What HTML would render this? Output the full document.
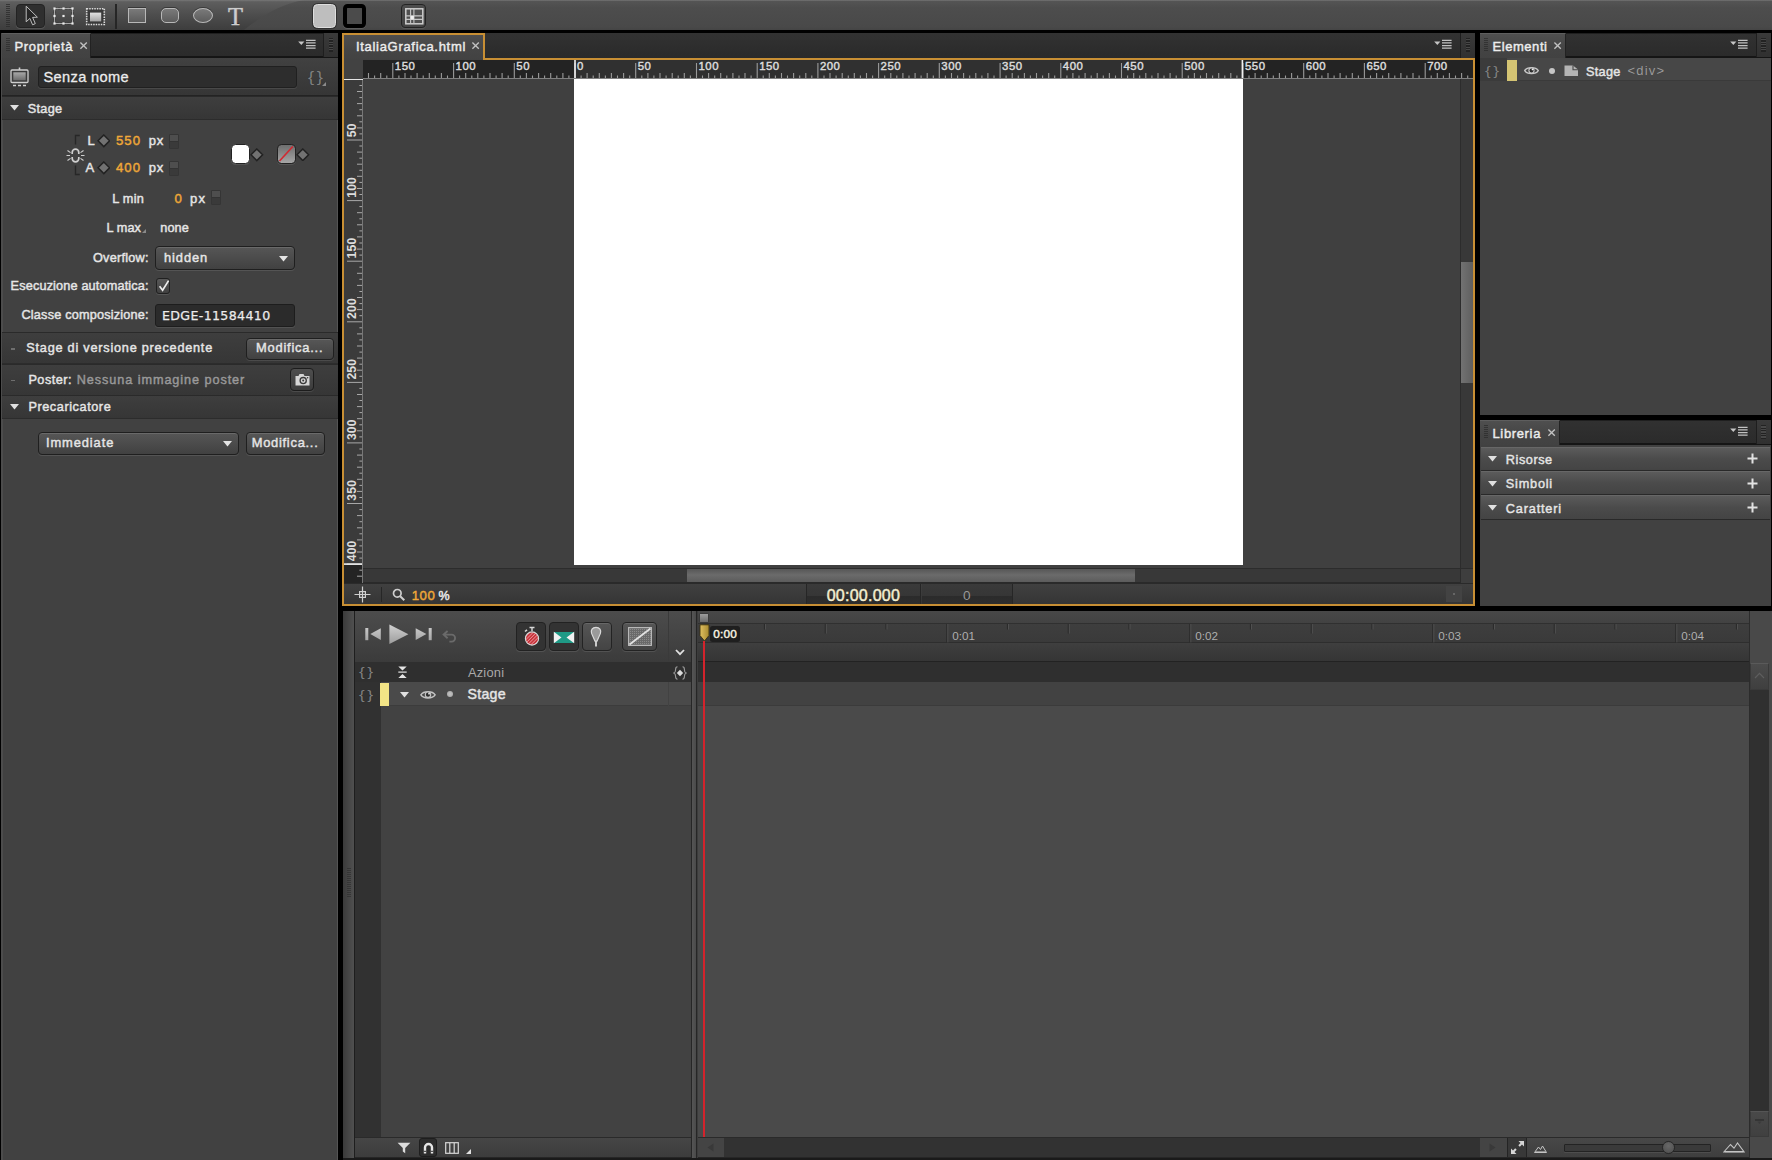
<!DOCTYPE html>
<html lang="it"><head><meta charset="utf-8"><title>ItaliaGrafica.html - Adobe Edge Animate</title>
<style>
html,body{margin:0;padding:0;background:#000;}
body{width:1772px;height:1160px;position:relative;overflow:hidden;font-family:"Liberation Sans",sans-serif;}
#app{position:absolute;left:0;top:0;width:1772px;height:1160px;overflow:hidden;background:#000;}
#app div,#app span.t,#app svg{position:absolute;box-sizing:border-box;}
#app span.t{white-space:pre;text-shadow:0 0 0.6px rgba(0,0,0,.35);}
</style></head><body><div id="app">
<div style="left:0px;top:0px;width:1772px;height:30.3px;background:linear-gradient(#767676 0,#545454 1.5px,#4d4d4d 25%,#494949 90%,#444 100%);"></div>
<svg style="left:0px;top:0px;" width="310" height="30" viewBox="0 0 310 30"><defs><linearGradient id="gt" x1="0" y1="0" x2="0" y2="1"><stop offset="0" stop-color="#787878"/><stop offset=".06" stop-color="#5e5e5e"/><stop offset=".5" stop-color="#4d4d4d"/><stop offset="1" stop-color="#3d3d3d"/></linearGradient></defs><path d="M0 0H304C280 4 262 16 244 30H0Z" fill="url(#gt)"/></svg>
<div style="left:6px;top:4px;width:4px;height:24px;background:repeating-linear-gradient(#2c2c2c 0,#2c2c2c 1px,transparent 1px,transparent 2px);opacity:.8;"></div>
<div style="left:16px;top:4px;width:29px;height:24px;background:#2f2f2f;border:1px solid #232323;border-radius:4px;box-shadow:0 1px 0 rgba(255,255,255,.12);"></div>
<svg style="left:24px;top:5px;" width="16" height="22" viewBox="0 0 16 22"><path d="M2.2 1.2 L2.2 16.8 L5.9 13.4 L8.6 19.8 L11.3 18.6 L8.6 12.4 L13.4 12.2 Z" fill="#262626" stroke="#bdbdbd" stroke-width="1" stroke-linejoin="round"/></svg>
<svg style="left:52px;top:6px;" width="23" height="20" viewBox="0 0 23 20"><rect x="2.5" y="2.5" width="18" height="15" fill="none" stroke="#2a2a2a" stroke-width="2.2" stroke-dasharray="2 1.6" opacity=".55"/><rect x="2.5" y="2.5" width="18" height="15" fill="none" stroke="#b4b4b4" stroke-width=".9"/><rect x="1.4" y="1.4" width="2.2" height="2.2" fill="#ececec"/><rect x="1.4" y="8.9" width="2.2" height="2.2" fill="#ececec"/><rect x="1.4" y="16.4" width="2.2" height="2.2" fill="#ececec"/><rect x="10.4" y="1.4" width="2.2" height="2.2" fill="#ececec"/><rect x="10.4" y="16.4" width="2.2" height="2.2" fill="#ececec"/><rect x="19.4" y="1.4" width="2.2" height="2.2" fill="#ececec"/><rect x="19.4" y="8.9" width="2.2" height="2.2" fill="#ececec"/><rect x="19.4" y="16.4" width="2.2" height="2.2" fill="#ececec"/><rect x="10.4" y="8.9" width="2.2" height="2.2" fill="#ececec"/></svg>
<svg style="left:85px;top:6.5px;" width="21" height="19" viewBox="0 0 21 19"><rect x="1.7" y="1.7" width="17.6" height="15.8" fill="#3a3a3a" stroke="#dcdcdc" stroke-width="1.6" stroke-dasharray="1.5 1.03"/><defs><linearGradient id="g1" x1="0" y1="0" x2="0" y2="1"><stop offset="0" stop-color="#e2e2e2"/><stop offset="1" stop-color="#a4a4a4"/></linearGradient></defs><rect x="5" y="5.6" width="11.2" height="8.8" fill="url(#g1)"/></svg>
<div style="left:115px;top:4px;width:2px;height:25px;background:#262626;"></div>
<div style="left:128px;top:8px;width:18px;height:15px;background:linear-gradient(#7a7a7a,#5c5c5c);border:1.6px solid #b8b8b8;box-shadow:0 -1px 0 rgba(0,0,0,.35);"></div>
<div style="left:161px;top:8px;width:18px;height:15px;background:linear-gradient(#7a7a7a,#5c5c5c);border:1.6px solid #b8b8b8;box-shadow:0 -1px 0 rgba(0,0,0,.35);border-radius:5px;"></div>
<div style="left:193px;top:8px;width:20px;height:15px;background:linear-gradient(#7a7a7a,#5c5c5c);border:1.6px solid #b8b8b8;box-shadow:0 -1px 0 rgba(0,0,0,.35);border-radius:50%;"></div>
<span id="t1" class="t" style="left:228px;top:2.67px;font:normal 24.5px/27.122px 'Liberation Serif',serif;color:#cdcdcd;letter-spacing:0px;-webkit-text-stroke:0.5px #cdcdcd;text-shadow:0 -1px 0 rgba(0,0,0,.4);">T</span>
<div style="left:313px;top:4px;width:23px;height:23.5px;background:#bebebe;border:1px solid #dedede;border-radius:4.5px;box-shadow:0 0 0 1px rgba(30,30,30,.55);"></div>
<div style="left:343px;top:4px;width:23px;height:23.5px;background:#4b4b4b;border:4.3px solid #000;border-radius:4.5px;box-shadow:0 1px 0 rgba(255,255,255,.12);"></div>
<div style="left:401px;top:4px;width:25px;height:24px;background:linear-gradient(#4e4e4e,#444);border:1.5px solid #232323;border-radius:4px;box-shadow:0 1px 0 rgba(255,255,255,.1);"></div>
<svg style="left:404.5px;top:7.5px;" width="19" height="17" viewBox="0 0 19 17"><rect x="0.8" y="0.8" width="17" height="15" fill="#505050" stroke="#cdcdcd" stroke-width="1.5"/><path d="M1 7.9H18M1 11.4H18M5.6 1V16M8.9 1V16" stroke="#c6c6c6" stroke-width="1.1" fill="none"/><rect x="5.6" y="7.9" width="3.3" height="3.5" fill="#f0f0f0"/></svg>
<div style="left:1px;top:33px;width:337px;height:1127px;background:#414141;border-left:2px solid #4c4c4c;"></div>
<div style="left:337px;top:33px;width:1px;height:1127px;background:#545454;"></div>
<div style="left:2px;top:33px;width:336px;height:25px;background:linear-gradient(#313131,#2b2b2b);border-bottom:2px solid #151515;border-top:1px solid #1f1f1f;"></div>
<div style="left:323px;top:33px;width:15px;height:24px;background:linear-gradient(#3a3a3a,#303030);border-left:1px solid #1e1e1e;"></div>
<div style="left:328.5px;top:38px;width:4.5px;height:14px;background:repeating-linear-gradient(#1f1f1f 0,#1f1f1f 1.2px,#4a4a4a 1.2px,#4a4a4a 2.5px);opacity:.85;"></div>
<svg style="left:296.5px;top:39.3px;" width="20" height="11" viewBox="0 0 20 11"><path d="M1.2 2.4H7.4L4.3 6Z" fill="#c6c6c6"/><path d="M9 1.3H18.6M9 3.9H18.6M9 6.5H18.6M9 9.1H18.6" stroke="#c2c2c2" stroke-width="1.25"/></svg>
<div style="left:2px;top:33px;width:89px;height:25px;background:linear-gradient(#4f4f4f,#444 60%,#424242);border-top:1px solid #5e5e5e;border-right:1px solid #222;"></div>
<div style="left:6px;top:38px;width:4px;height:13px;background:repeating-linear-gradient(#2a2a2a 0,#2a2a2a 1px,transparent 1px,transparent 2px);opacity:.7;"></div>
<span id="t2" class="t" style="left:14.5px;top:39.94px;font:normal 13px/14.521px 'Liberation Sans',sans-serif;color:#ededed;letter-spacing:0.639px;-webkit-text-stroke:0.45px #ededed;">Proprietà</span>
<svg style="left:79px;top:41px;" width="9" height="9" viewBox="0 0 9 9"><path d="M1.4 1.4L7.8 7.8M7.8 1.4L1.4 7.8" stroke="#c2c2c2" stroke-width="1.35" fill="none"/></svg>
<div style="left:2px;top:58px;width:336px;height:38px;background:linear-gradient(#414141,#363636);border-bottom:1px solid #232323;"></div>
<svg style="left:10px;top:67px;" width="19" height="20" viewBox="0 0 19 20"><defs><linearGradient id="g2" x1="0" y1="0" x2="0" y2="1"><stop offset="0" stop-color="#a8a8a8"/><stop offset="1" stop-color="#6c6c6c"/></linearGradient></defs><path d="M9.5 0.5V3" stroke="#cfcfcf" stroke-width="1.6"/><rect x="1" y="3" width="17" height="12.5" rx="1" fill="#3a3a3a" stroke="#cfcfcf" stroke-width="1.3"/><rect x="3.3" y="5.3" width="12.4" height="8" fill="url(#g2)"/><path d="M3 18.5H6M8 18.5H11M13 18.5H16" stroke="#cfcfcf" stroke-width="1.5"/></svg>
<div style="left:38px;top:66px;width:259px;height:22px;background:#2d2d2d;border:1px solid #202020;border-radius:3px;box-shadow:0 1px 0 rgba(255,255,255,.09);"></div>
<span id="t3" class="t" style="left:43.5px;top:68.89px;font:normal 14.6px/16.308px 'Liberation Sans',sans-serif;color:#ececec;letter-spacing:0.355px;-webkit-text-stroke:0.3px #ececec;">Senza nome</span>
<span id="t4" class="t" style="left:308px;top:69.07px;font:normal 14.4px/16.085px 'Liberation Sans',sans-serif;color:#808080;letter-spacing:0px;letter-spacing:2px;transform:scaleX(1.28);transform-origin:0 50%;">{}</span>
<svg style="left:322px;top:82px;" width="4" height="4" viewBox="0 0 4 4"><path d="M4 0V4H0Z" fill="#8a8a8a"/></svg>
<div style="left:2px;top:96px;width:336px;height:24px;background:linear-gradient(#3e3e3e,#363636);border-top:1px solid #2a2a2a;border-bottom:1px solid #2c2c2c;"></div>
<svg style="left:10px;top:105px;" width="9" height="6" viewBox="0 0 9 6"><path d="M0 0H9L4.5 5.5Z" fill="#e0e0e0"/></svg>
<span id="t5" class="t" style="left:27.8px;top:101.81px;font:normal 12.7px/14.186px 'Liberation Sans',sans-serif;color:#e6e6e6;letter-spacing:0.289px;-webkit-text-stroke:0.45px #e6e6e6;">Stage</span>
<svg style="left:66px;top:134px;" width="20" height="42" viewBox="0 0 20 42"><path d="M13.8 1.5H9.5V10.5M13.8 40.5H9.5V31.5" fill="none" stroke="#272727" stroke-width="1.4"/><path d="M6.2 20V18.5a3.3 3.3 0 0 1 6.6 0V20M6.2 23V24.5a3.3 3.3 0 0 0 6.6 0V23" fill="none" stroke="#cfcfcf" stroke-width="1.7"/><path d="M0.5 21.5H4M15 21.5H18.5M1.5 16.5L4.5 18.6M17.5 16.5L14.5 18.6M1.5 26.5L4.5 24.4M17.5 26.5L14.5 24.4" stroke="#cfcfcf" stroke-width="1.1"/></svg>
<span id="t6" class="t" style="left:87.5px;top:134.13px;font:normal 13px/14.521px 'Liberation Sans',sans-serif;color:#e6e6e6;letter-spacing:-0.234px;-webkit-text-stroke:0.45px #e6e6e6;">L</span>
<svg style="left:96.8px;top:134.0px;" width="13.6" height="13.6" viewBox="0 0 13.6 13.6"><path d="M6.8 1L12.6 6.8L6.8 12.6L1 6.8Z" fill="#727272" stroke="#222" stroke-width="1.5"/></svg>
<span id="t7" class="t" style="left:116px;top:133.95px;font:normal 13.2px/14.744px 'Liberation Sans',sans-serif;color:#f0a93a;letter-spacing:0.995px;-webkit-text-stroke:0.45px #f0a93a;">550</span>
<span id="t8" class="t" style="left:148.7px;top:134.13px;font:normal 13px/14.521px 'Liberation Sans',sans-serif;color:#e6e6e6;letter-spacing:0.783px;-webkit-text-stroke:0.45px #e6e6e6;">px</span>
<div style="left:169px;top:133.5px;width:10px;height:15px;background:#3a3a3a;border:1px solid #353535;border-radius:1px;"></div>
<div style="left:170px;top:134.5px;width:8px;height:6px;background:#4e4e4e;"></div>
<div style="left:170px;top:140.5px;width:8px;height:1px;background:#333;"></div>
<span id="t9" class="t" style="left:85.5px;top:161.13px;font:normal 13px/14.521px 'Liberation Sans',sans-serif;color:#e6e6e6;letter-spacing:0.828px;-webkit-text-stroke:0.45px #e6e6e6;">A</span>
<svg style="left:96.8px;top:161.2px;" width="13.6" height="13.6" viewBox="0 0 13.6 13.6"><path d="M6.8 1L12.6 6.8L6.8 12.6L1 6.8Z" fill="#727272" stroke="#222" stroke-width="1.5"/></svg>
<span id="t10" class="t" style="left:116px;top:160.95px;font:normal 13.2px/14.744px 'Liberation Sans',sans-serif;color:#f0a93a;letter-spacing:0.995px;-webkit-text-stroke:0.45px #f0a93a;">400</span>
<span id="t11" class="t" style="left:148.7px;top:161.13px;font:normal 13px/14.521px 'Liberation Sans',sans-serif;color:#e6e6e6;letter-spacing:0.783px;-webkit-text-stroke:0.45px #e6e6e6;">px</span>
<div style="left:169px;top:160.5px;width:10px;height:15px;background:#3a3a3a;border:1px solid #353535;border-radius:1px;"></div>
<div style="left:170px;top:161.5px;width:8px;height:6px;background:#4e4e4e;"></div>
<div style="left:170px;top:167.5px;width:8px;height:1px;background:#333;"></div>
<div style="left:230.5px;top:143.6px;width:19px;height:20.5px;background:#fff;border:1.8px solid #222;border-radius:4.5px;box-shadow:0 1px 0 rgba(255,255,255,.1);"></div>
<svg style="left:250.39999999999998px;top:148.2px;" width="13.6" height="13.6" viewBox="0 0 13.6 13.6"><path d="M6.8 1L12.6 6.8L6.8 12.6L1 6.8Z" fill="#727272" stroke="#222" stroke-width="1.5"/></svg>
<div style="left:276.5px;top:143.6px;width:19px;height:20.5px;background:linear-gradient(#6e6e6e,#a6a6a6);border:1.8px solid #222;border-radius:4.5px;overflow:hidden;box-shadow:0 1px 0 rgba(255,255,255,.1);"></div>
<svg style="left:278px;top:145px;" width="16" height="17" viewBox="0 0 16 17"><path d="M1.5 16L14.8 1.5" stroke="#d02a32" stroke-width="1.7"/></svg>
<svg style="left:296.4px;top:147.7px;" width="13.6" height="13.6" viewBox="0 0 13.6 13.6"><path d="M6.8 1L12.6 6.8L6.8 12.6L1 6.8Z" fill="#727272" stroke="#222" stroke-width="1.5"/></svg>
<span id="t12" class="t" style="left:112.3px;top:192.01px;font:normal 12.7px/14.186px 'Liberation Sans',sans-serif;color:#e6e6e6;letter-spacing:0.228px;-webkit-text-stroke:0.45px #e6e6e6;">L min</span>
<span id="t13" class="t" style="left:174.6px;top:191.55px;font:normal 13.2px/14.744px 'Liberation Sans',sans-serif;color:#f0a93a;letter-spacing:-0.644px;-webkit-text-stroke:0.45px #f0a93a;">0</span>
<span id="t14" class="t" style="left:190px;top:191.74px;font:normal 13px/14.521px 'Liberation Sans',sans-serif;color:#e6e6e6;letter-spacing:1.283px;-webkit-text-stroke:0.45px #e6e6e6;">px</span>
<div style="left:210.5px;top:190px;width:10px;height:15px;background:#3a3a3a;border:1px solid #353535;border-radius:1px;"></div>
<div style="left:211.5px;top:191px;width:8px;height:6px;background:#4e4e4e;"></div>
<div style="left:211.5px;top:197px;width:8px;height:1px;background:#333;"></div>
<span id="t15" class="t" style="left:106.5px;top:221.01px;font:normal 12.7px/14.186px 'Liberation Sans',sans-serif;color:#e6e6e6;letter-spacing:0.081px;-webkit-text-stroke:0.45px #e6e6e6;">L max</span>
<svg style="left:141.5px;top:229px;" width="4" height="4" viewBox="0 0 4 4"><path d="M4 0V4H0Z" fill="#8a8a8a"/></svg>
<span id="t16" class="t" style="left:160.2px;top:221.01px;font:normal 12.7px/14.186px 'Liberation Sans',sans-serif;color:#e6e6e6;letter-spacing:0.141px;-webkit-text-stroke:0.45px #e6e6e6;">none</span>
<span id="t17" class="t" style="left:93px;top:250.81px;font:normal 12.7px/14.186px 'Liberation Sans',sans-serif;color:#e6e6e6;letter-spacing:0.234px;-webkit-text-stroke:0.45px #e6e6e6;">Overflow:</span>
<div style="left:155px;top:246px;width:140px;height:24px;background:linear-gradient(#565656,#414141);border:1px solid #1f1f1f;border-radius:4px;box-shadow:0 1px 0 rgba(255,255,255,.1),inset 0 1px 0 rgba(255,255,255,.12);"></div>
<span id="t18" class="t" style="left:164px;top:250.63px;font:normal 12.9px/14.409px 'Liberation Sans',sans-serif;color:#e6e6e6;letter-spacing:0.914px;-webkit-text-stroke:0.45px #e6e6e6;">hidden</span>
<svg style="left:279px;top:256.0px;" width="9" height="6" viewBox="0 0 9 6"><path d="M0 0H9L4.5 5.5Z" fill="#e4e4e4"/></svg>
<span id="t19" class="t" style="left:10.6px;top:279.01px;font:normal 12.7px/14.186px 'Liberation Sans',sans-serif;color:#e6e6e6;letter-spacing:0.154px;-webkit-text-stroke:0.45px #e6e6e6;">Esecuzione automatica:</span>
<div style="left:155.6px;top:278.4px;width:14.4px;height:15.2px;background:linear-gradient(#585858,#404040);border:1px solid #202020;border-radius:3px;box-shadow:0 1px 0 rgba(255,255,255,.1);"></div>
<svg style="left:156.6px;top:278.6px;" width="14" height="14" viewBox="0 0 14 14"><path d="M2.6 7.3L5.6 11.2L11.6 1.6" fill="none" stroke="#ededed" stroke-width="1.7"/></svg>
<span id="t20" class="t" style="left:21.5px;top:307.81px;font:normal 12.7px/14.186px 'Liberation Sans',sans-serif;color:#e6e6e6;letter-spacing:0.19px;-webkit-text-stroke:0.45px #e6e6e6;">Classe composizione:</span>
<div style="left:155px;top:304px;width:140px;height:22.5px;background:#2b2b2b;border:1px solid #1d1d1d;border-radius:3px;box-shadow:0 1px 0 rgba(255,255,255,.09);"></div>
<span id="t21" class="t" style="left:162px;top:308.61px;font:normal 12.6px/14.666px 'DejaVu Sans','Liberation Sans',sans-serif;color:#ececec;letter-spacing:0.345px;-webkit-text-stroke:0.25px #ececec;">EDGE-11584410</span>
<div style="left:2px;top:332px;width:336px;height:32px;background:linear-gradient(#3e3e3e,#363636);border-top:1px solid #2a2a2a;border-bottom:1px solid #2c2c2c;"></div>
<div style="left:10.5px;top:348px;width:4px;height:1.5px;background:#6e6e6e;"></div>
<span id="t22" class="t" style="left:26.3px;top:340.91px;font:normal 12.7px/14.186px 'Liberation Sans',sans-serif;color:#e6e6e6;letter-spacing:0.773px;-webkit-text-stroke:0.45px #e6e6e6;">Stage di versione precedente</span>
<div style="left:245.5px;top:337.5px;width:88.5px;height:22px;background:linear-gradient(#575757,#414141);border:1px solid #1f1f1f;border-radius:4px;box-shadow:0 1px 0 rgba(255,255,255,.1),inset 0 1px 0 rgba(255,255,255,.12);"></div>
<span id="t23" class="t" style="left:256px;top:340.73px;font:normal 12.9px/14.409px 'Liberation Sans',sans-serif;color:#e6e6e6;letter-spacing:0.777px;-webkit-text-stroke:0.45px #e6e6e6;">Modifica...</span>
<div style="left:2px;top:363.5px;width:336px;height:32px;background:linear-gradient(#3e3e3e,#363636);border-top:1px solid #2a2a2a;border-bottom:1px solid #2c2c2c;"></div>
<div style="left:10.5px;top:379.5px;width:4px;height:1.5px;background:#6e6e6e;"></div>
<span id="t24" class="t" style="left:28.4px;top:372.61px;font:normal 12.7px/14.186px 'Liberation Sans',sans-serif;color:#e6e6e6;letter-spacing:0.485px;-webkit-text-stroke:0.45px #e6e6e6;">Poster:</span>
<span id="t25" class="t" style="left:76.8px;top:372.61px;font:normal 12.7px/14.186px 'Liberation Sans',sans-serif;color:#9a9a9a;letter-spacing:0.913px;-webkit-text-stroke:0.45px #9a9a9a;">Nessuna immagine poster</span>
<div style="left:290.3px;top:368.2px;width:24px;height:23px;background:linear-gradient(#4e4e4e,#3c3c3c);border:1.5px solid #1c1c1c;border-radius:4px;box-shadow:0 1px 0 rgba(255,255,255,.1);"></div>
<svg style="left:295px;top:373px;" width="15" height="13" viewBox="0 0 15 13"><path d="M0.5 3H3.5L4.5 1H8.5L9.5 3H14.5V12.5H0.5Z" fill="#d6d6d6"/><circle cx="8.2" cy="7.6" r="3.1" fill="#d6d6d6" stroke="#3a3a3a" stroke-width="1.3"/><circle cx="8.2" cy="7.6" r="1" fill="#3a3a3a"/><circle cx="12.6" cy="4.8" r=".8" fill="#3a3a3a"/></svg>
<div style="left:2px;top:395px;width:336px;height:24px;background:linear-gradient(#3e3e3e,#363636);border-top:1px solid #2a2a2a;border-bottom:1px solid #2c2c2c;"></div>
<svg style="left:10px;top:404px;" width="9" height="6" viewBox="0 0 9 6"><path d="M0 0H9L4.5 5.5Z" fill="#e0e0e0"/></svg>
<span id="t26" class="t" style="left:28.4px;top:400.41px;font:normal 12.7px/14.186px 'Liberation Sans',sans-serif;color:#e6e6e6;letter-spacing:0.573px;-webkit-text-stroke:0.45px #e6e6e6;">Precaricatore</span>
<div style="left:38px;top:431.5px;width:201px;height:23px;background:linear-gradient(#565656,#414141);border:1px solid #1f1f1f;border-radius:4px;box-shadow:0 1px 0 rgba(255,255,255,.1),inset 0 1px 0 rgba(255,255,255,.12);"></div>
<span id="t27" class="t" style="left:46px;top:435.63px;font:normal 12.9px/14.409px 'Liberation Sans',sans-serif;color:#e6e6e6;letter-spacing:0.89px;-webkit-text-stroke:0.45px #e6e6e6;">Immediate</span>
<svg style="left:223px;top:441.0px;" width="9" height="6" viewBox="0 0 9 6"><path d="M0 0H9L4.5 5.5Z" fill="#e4e4e4"/></svg>
<div style="left:245.5px;top:431.5px;width:79.5px;height:23px;background:linear-gradient(#575757,#414141);border:1px solid #1f1f1f;border-radius:4px;box-shadow:0 1px 0 rgba(255,255,255,.1),inset 0 1px 0 rgba(255,255,255,.12);"></div>
<span id="t28" class="t" style="left:251.7px;top:435.63px;font:normal 12.9px/14.409px 'Liberation Sans',sans-serif;color:#e6e6e6;letter-spacing:0.732px;-webkit-text-stroke:0.45px #e6e6e6;">Modifica...</span>
<div style="left:342px;top:33px;width:1133px;height:573px;background:#c88f34;"></div>
<div style="left:344px;top:35px;width:1129px;height:569px;background:#404040;"></div>
<div style="left:484px;top:33px;width:991px;height:24.5px;background:#000;"></div>
<div style="left:484px;top:33px;width:976px;height:24.5px;background:linear-gradient(#323232,#2a2a2a);"></div>
<div style="left:1460px;top:33px;width:15px;height:24.5px;background:linear-gradient(#3a3a3a,#303030);border-left:1px solid #1e1e1e;"></div>
<div style="left:1465.5px;top:38px;width:4.5px;height:14px;background:repeating-linear-gradient(#1f1f1f 0,#1f1f1f 1.2px,#4a4a4a 1.2px,#4a4a4a 2.5px);opacity:.85;"></div>
<svg style="left:1432.7px;top:39.3px;" width="20" height="11" viewBox="0 0 20 11"><path d="M1.2 2.4H7.4L4.3 6Z" fill="#c6c6c6"/><path d="M9 1.3H18.6M9 3.9H18.6M9 6.5H18.6M9 9.1H18.6" stroke="#c2c2c2" stroke-width="1.25"/></svg>
<div style="left:482.5px;top:58px;width:992.5px;height:2px;background:#c88f34;"></div>
<div style="left:482.5px;top:33px;width:2px;height:27px;background:#c88f34;"></div>
<div style="left:344px;top:35px;width:138.5px;height:25px;background:linear-gradient(#4e4e4e,#454545 60%,#424242);"></div>
<span id="t29" class="t" style="left:356px;top:39.73px;font:normal 13px/14.521px 'Liberation Sans',sans-serif;color:#ededed;letter-spacing:0.692px;-webkit-text-stroke:0.45px #ededed;">ItaliaGrafica.html</span>
<svg style="left:470.5px;top:41px;" width="9" height="9" viewBox="0 0 9 9"><path d="M1.4 1.4L7.8 7.8M7.8 1.4L1.4 7.8" stroke="#c2c2c2" stroke-width="1.35" fill="none"/></svg>
<div style="left:363px;top:60px;width:1110px;height:19px;background:#232323;border-bottom:1px solid #808080;"></div>
<div style="left:575px;top:60px;width:667.5px;height:18px;background:#303030;"></div>
<div style="left:344px;top:60px;width:19px;height:19px;background:#424242;"></div>
<div style="left:344px;top:79px;width:19px;height:504px;background:#242424;border-right:1px solid #777;"></div>
<div style="left:344px;top:79px;width:18px;height:486px;background:#3b3b3b;"></div>
<svg style="left:363px;top:60px;" width="1110" height="18" viewBox="0 0 1110 18"><path d="M5.5 13V18M11.6 15.4V18M17.7 13V18M23.8 15.4V18M29.8 3V18M35.9 15.4V18M42.0 13V18M48.0 15.4V18M54.1 13V18M60.2 15.4V18M66.3 13V18M72.3 15.4V18M78.4 13V18M84.5 15.4V18M90.6 3V18M96.6 15.4V18M102.7 13V18M108.8 15.4V18M114.8 13V18M120.9 15.4V18M127.0 13V18M133.1 15.4V18M139.1 13V18M145.2 15.4V18M151.3 3V18M157.3 15.4V18M163.4 13V18M169.5 15.4V18M175.6 13V18M181.6 15.4V18M187.7 13V18M193.8 15.4V18M199.9 13V18M205.9 15.4V18M212.0 3V18M218.1 15.4V18M224.1 13V18M230.2 15.4V18M236.3 13V18M242.4 15.4V18M248.4 13V18M254.5 15.4V18M260.6 13V18M266.7 15.4V18M272.7 3V18M278.8 15.4V18M284.9 13V18M290.9 15.4V18M297.0 13V18M303.1 15.4V18M309.2 13V18M315.2 15.4V18M321.3 13V18M327.4 15.4V18M333.5 3V18M339.5 15.4V18M345.6 13V18M351.7 15.4V18M357.7 13V18M363.8 15.4V18M369.9 13V18M376.0 15.4V18M382.0 13V18M388.1 15.4V18M394.2 3V18M400.2 15.4V18M406.3 13V18M412.4 15.4V18M418.5 13V18M424.5 15.4V18M430.6 13V18M436.7 15.4V18M442.8 13V18M448.8 15.4V18M454.9 3V18M461.0 15.4V18M467.0 13V18M473.1 15.4V18M479.2 13V18M485.3 15.4V18M491.3 13V18M497.4 15.4V18M503.5 13V18M509.6 15.4V18M515.6 3V18M521.7 15.4V18M527.8 13V18M533.8 15.4V18M539.9 13V18M546.0 15.4V18M552.1 13V18M558.1 15.4V18M564.2 13V18M570.3 15.4V18M576.3 3V18M582.4 15.4V18M588.5 13V18M594.6 15.4V18M600.6 13V18M606.7 15.4V18M612.8 13V18M618.9 15.4V18M624.9 13V18M631.0 15.4V18M637.1 3V18M643.1 15.4V18M649.2 13V18M655.3 15.4V18M661.4 13V18M667.4 15.4V18M673.5 13V18M679.6 15.4V18M685.7 13V18M691.7 15.4V18M697.8 3V18M703.9 15.4V18M709.9 13V18M716.0 15.4V18M722.1 13V18M728.2 15.4V18M734.2 13V18M740.3 15.4V18M746.4 13V18M752.5 15.4V18M758.5 3V18M764.6 15.4V18M770.7 13V18M776.7 15.4V18M782.8 13V18M788.9 15.4V18M795.0 13V18M801.0 15.4V18M807.1 13V18M813.2 15.4V18M819.2 3V18M825.3 15.4V18M831.4 13V18M837.5 15.4V18M843.5 13V18M849.6 15.4V18M855.7 13V18M861.8 15.4V18M867.8 13V18M873.9 15.4V18M880.0 3V18M886.0 15.4V18M892.1 13V18M898.2 15.4V18M904.3 13V18M910.3 15.4V18M916.4 13V18M922.5 15.4V18M928.6 13V18M934.6 15.4V18M940.7 3V18M946.8 15.4V18M952.8 13V18M958.9 15.4V18M965.0 13V18M971.1 15.4V18M977.1 13V18M983.2 15.4V18M989.3 13V18M995.4 15.4V18M1001.4 3V18M1007.5 15.4V18M1013.6 13V18M1019.6 15.4V18M1025.7 13V18M1031.8 15.4V18M1037.9 13V18M1043.9 15.4V18M1050.0 13V18M1056.1 15.4V18M1062.2 3V18M1068.2 15.4V18M1074.3 13V18M1080.4 15.4V18M1086.4 13V18M1092.5 15.4V18M1098.6 13V18M1104.7 15.4V18" stroke="#9a9a9a" stroke-width="1.1" fill="none"/><path d="M212.0 0V18M879.4 0V18" stroke="#f0f0f0" stroke-width="1.6"/></svg>
<span id="t30" class="t" style="left:394.8px;top:59.78px;font:normal 11.4px/12.734px 'Liberation Sans',sans-serif;color:#dcdcdc;letter-spacing:0.528px;-webkit-text-stroke:0.45px #dcdcdc;">150</span>
<span id="t31" class="t" style="left:455.6px;top:59.78px;font:normal 11.4px/12.734px 'Liberation Sans',sans-serif;color:#dcdcdc;letter-spacing:0.495px;-webkit-text-stroke:0.45px #dcdcdc;">100</span>
<span id="t32" class="t" style="left:516.3px;top:59.78px;font:normal 11.4px/12.734px 'Liberation Sans',sans-serif;color:#dcdcdc;letter-spacing:0.514px;-webkit-text-stroke:0.45px #dcdcdc;">50</span>
<span id="t33" class="t" style="left:577.0px;top:59.78px;font:normal 11.4px/12.734px 'Liberation Sans',sans-serif;color:#dcdcdc;letter-spacing:0.556px;-webkit-text-stroke:0.45px #dcdcdc;">0</span>
<span id="t34" class="t" style="left:637.7px;top:59.78px;font:normal 11.4px/12.734px 'Liberation Sans',sans-serif;color:#dcdcdc;letter-spacing:0.514px;-webkit-text-stroke:0.45px #dcdcdc;">50</span>
<span id="t35" class="t" style="left:698.5px;top:59.78px;font:normal 11.4px/12.734px 'Liberation Sans',sans-serif;color:#dcdcdc;letter-spacing:0.495px;-webkit-text-stroke:0.45px #dcdcdc;">100</span>
<span id="t36" class="t" style="left:759.2px;top:59.78px;font:normal 11.4px/12.734px 'Liberation Sans',sans-serif;color:#dcdcdc;letter-spacing:0.495px;-webkit-text-stroke:0.45px #dcdcdc;">150</span>
<span id="t37" class="t" style="left:819.9px;top:59.78px;font:normal 11.4px/12.734px 'Liberation Sans',sans-serif;color:#dcdcdc;letter-spacing:0.495px;-webkit-text-stroke:0.45px #dcdcdc;">200</span>
<span id="t38" class="t" style="left:880.6px;top:59.78px;font:normal 11.4px/12.734px 'Liberation Sans',sans-serif;color:#dcdcdc;letter-spacing:0.528px;-webkit-text-stroke:0.45px #dcdcdc;">250</span>
<span id="t39" class="t" style="left:941.3px;top:59.78px;font:normal 11.4px/12.734px 'Liberation Sans',sans-serif;color:#dcdcdc;letter-spacing:0.528px;-webkit-text-stroke:0.45px #dcdcdc;">300</span>
<span id="t40" class="t" style="left:1002.1px;top:59.78px;font:normal 11.4px/12.734px 'Liberation Sans',sans-serif;color:#dcdcdc;letter-spacing:0.495px;-webkit-text-stroke:0.45px #dcdcdc;">350</span>
<span id="t41" class="t" style="left:1062.8px;top:59.78px;font:normal 11.4px/12.734px 'Liberation Sans',sans-serif;color:#dcdcdc;letter-spacing:0.495px;-webkit-text-stroke:0.45px #dcdcdc;">400</span>
<span id="t42" class="t" style="left:1123.5px;top:59.78px;font:normal 11.4px/12.734px 'Liberation Sans',sans-serif;color:#dcdcdc;letter-spacing:0.528px;-webkit-text-stroke:0.45px #dcdcdc;">450</span>
<span id="t43" class="t" style="left:1184.2px;top:59.78px;font:normal 11.4px/12.734px 'Liberation Sans',sans-serif;color:#dcdcdc;letter-spacing:0.528px;-webkit-text-stroke:0.45px #dcdcdc;">500</span>
<span id="t44" class="t" style="left:1245.0px;top:59.78px;font:normal 11.4px/12.734px 'Liberation Sans',sans-serif;color:#dcdcdc;letter-spacing:0.495px;-webkit-text-stroke:0.45px #dcdcdc;">550</span>
<span id="t45" class="t" style="left:1305.7px;top:59.78px;font:normal 11.4px/12.734px 'Liberation Sans',sans-serif;color:#dcdcdc;letter-spacing:0.495px;-webkit-text-stroke:0.45px #dcdcdc;">600</span>
<span id="t46" class="t" style="left:1366.4px;top:59.78px;font:normal 11.4px/12.734px 'Liberation Sans',sans-serif;color:#dcdcdc;letter-spacing:0.528px;-webkit-text-stroke:0.45px #dcdcdc;">650</span>
<span id="t47" class="t" style="left:1427.2px;top:59.78px;font:normal 11.4px/12.734px 'Liberation Sans',sans-serif;color:#dcdcdc;letter-spacing:0.495px;-webkit-text-stroke:0.45px #dcdcdc;">700</span>
<svg style="left:344px;top:79px;" width="18" height="504" viewBox="0 0 18 504"><path d="M3 0.4H18M15.4 6.5H18M13 12.5H18M15.4 18.6H18M13 24.6H18M15.4 30.7H18M13 36.8H18M15.4 42.8H18M13 48.9H18M15.4 54.9H18M3 61.0H18M15.4 67.0H18M13 73.1H18M15.4 79.2H18M13 85.2H18M15.4 91.3H18M13 97.3H18M15.4 103.4H18M13 109.5H18M15.4 115.5H18M3 121.6H18M15.4 127.6H18M13 133.7H18M15.4 139.8H18M13 145.8H18M15.4 151.9H18M13 157.9H18M15.4 164.0H18M13 170.1H18M15.4 176.1H18M3 182.2H18M15.4 188.2H18M13 194.3H18M15.4 200.3H18M13 206.4H18M15.4 212.5H18M13 218.5H18M15.4 224.6H18M13 230.6H18M15.4 236.7H18M3 242.8H18M15.4 248.8H18M13 254.9H18M15.4 260.9H18M13 267.0H18M15.4 273.1H18M13 279.1H18M15.4 285.2H18M13 291.2H18M15.4 297.3H18M3 303.4H18M15.4 309.4H18M13 315.5H18M15.4 321.5H18M13 327.6H18M15.4 333.6H18M13 339.7H18M15.4 345.8H18M13 351.8H18M15.4 357.9H18M3 363.9H18M15.4 370.0H18M13 376.1H18M15.4 382.1H18M13 388.2H18M15.4 394.2H18M13 400.3H18M15.4 406.4H18M13 412.4H18M15.4 418.5H18M3 424.5H18M15.4 430.6H18M13 436.6H18M15.4 442.7H18M13 448.8H18M15.4 454.8H18M13 460.9H18M15.4 466.9H18M13 473.0H18M15.4 479.1H18M3 485.1H18M15.4 491.2H18M13 497.2H18" stroke="#a8a8a8" stroke-width="1" fill="none"/><path d="M0 485.1H18" stroke="#f0f0f0" stroke-width="1.6"/></svg>
<div style="left:344px;top:78.5px;width:18.5px;height:1.5px;background:#e6e6e6;"></div>
<svg style="left:344px;top:79px;" width="18" height="504" viewBox="0 0 18 504"><g font-family="Liberation Sans,sans-serif" font-weight="bold" font-size="12.2" fill="#dcdcdc"><text x="11.8" y="58.2" transform="rotate(-90 11.8 58.2)" textLength="13.8" lengthAdjust="spacing">50</text><text x="11.8" y="118.8" transform="rotate(-90 11.8 118.8)" textLength="20.7" lengthAdjust="spacing">100</text><text x="11.8" y="179.4" transform="rotate(-90 11.8 179.4)" textLength="20.7" lengthAdjust="spacing">150</text><text x="11.8" y="240.0" transform="rotate(-90 11.8 240.0)" textLength="20.7" lengthAdjust="spacing">200</text><text x="11.8" y="300.6" transform="rotate(-90 11.8 300.6)" textLength="20.7" lengthAdjust="spacing">250</text><text x="11.8" y="361.1" transform="rotate(-90 11.8 361.1)" textLength="20.7" lengthAdjust="spacing">300</text><text x="11.8" y="421.7" transform="rotate(-90 11.8 421.7)" textLength="20.7" lengthAdjust="spacing">350</text><text x="11.8" y="482.3" transform="rotate(-90 11.8 482.3)" textLength="20.7" lengthAdjust="spacing">400</text></g></svg>
<div style="left:574.4px;top:79px;width:668.2px;height:485.7px;background:#fff;"></div>
<div style="left:363px;top:567.5px;width:1096.5px;height:15.5px;background:#383838;border-top:1px solid #2c2c2c;border-bottom:1px solid #2a2a2a;"></div>
<div style="left:687px;top:568.5px;width:448px;height:13px;background:linear-gradient(#565656,#6b6b6b 45%,#5c5c5c);"></div>
<div style="left:1459.5px;top:79px;width:13.5px;height:504px;background:#383838;border-left:1px solid #2c2c2c;"></div>
<div style="left:1460.5px;top:262px;width:12.5px;height:120.5px;background:linear-gradient(90deg,#727272,#5f5f5f);"></div>
<div style="left:1459.5px;top:567.5px;width:13.5px;height:15.5px;background:#3e3e3e;border-left:1px solid #2c2c2c;border-top:1px solid #2c2c2c;"></div>
<div style="left:344px;top:583px;width:1129px;height:21px;background:linear-gradient(#404040,#353535);border-top:1px solid #2a2a2a;"></div>
<svg style="left:354px;top:586px;" width="17" height="17" viewBox="0 0 17 17"><rect x="5.6" y="5.6" width="5.8" height="5.8" fill="none" stroke="#d0d0d0" stroke-width="1.2"/><path d="M8.5 0.5V16.5M0.5 8.5H16.5" stroke="#d0d0d0" stroke-width="1.2"/></svg>
<div style="left:380.5px;top:587px;width:1px;height:15px;background:#262626;"></div>
<svg style="left:392px;top:588px;" width="14" height="14" viewBox="0 0 14 14"><circle cx="5.3" cy="5.3" r="3.8" fill="none" stroke="#cfcfcf" stroke-width="1.7"/><path d="M8.2 8.2L12.3 12.3" stroke="#cfcfcf" stroke-width="2"/></svg>
<span id="t48" class="t" style="left:411.7px;top:588.95px;font:normal 13.2px/14.744px 'Liberation Sans',sans-serif;color:#f0a93a;letter-spacing:0.528px;-webkit-text-stroke:0.45px #f0a93a;">100</span>
<span id="t49" class="t" style="left:438.6px;top:589.59px;font:normal 12.5px/13.963px 'Liberation Sans',sans-serif;color:#ededed;letter-spacing:-1.225px;-webkit-text-stroke:0.45px #ededed;">%</span>
<div style="left:805.5px;top:584px;width:115.5px;height:20px;background:linear-gradient(#3a3a3a 0,#363636 58%,#2b2b2b 62%,#2d2d2d);border-left:1px solid #262626;border-right:1px solid #262626;"></div>
<div style="left:922px;top:584px;width:90.5px;height:20px;background:linear-gradient(#3a3a3a 0,#363636 58%,#2b2b2b 62%,#2d2d2d);border-right:1px solid #262626;"></div>
<span id="t50" class="t" style="left:826.7px;top:586.62px;font:normal 16px/17.872px 'Liberation Sans',sans-serif;color:#f5f0d2;letter-spacing:0.257px;-webkit-text-stroke:0.45px #f5f0d2;">00:00.000</span>
<span id="t51" class="t" style="left:963px;top:587.59px;font:normal 13.6px/15.191px 'Liberation Sans',sans-serif;color:#9a9a9a;letter-spacing:-0.263px;">0</span>
<div style="left:1445.5px;top:585.5px;width:16.5px;height:16px;background:#434343;"></div>
<div style="left:1452.5px;top:592.5px;width:2px;height:2px;background:#666;"></div>
<div style="left:1480px;top:33px;width:290.5px;height:382px;background:#414141;"></div>
<div style="left:1480px;top:33px;width:290.5px;height:25px;background:linear-gradient(#313131,#2b2b2b);border-bottom:2px solid #151515;border-top:1px solid #1f1f1f;"></div>
<div style="left:1755.5px;top:33px;width:15px;height:24px;background:linear-gradient(#3a3a3a,#303030);border-left:1px solid #1e1e1e;"></div>
<div style="left:1761.0px;top:38px;width:4.5px;height:14px;background:repeating-linear-gradient(#1f1f1f 0,#1f1f1f 1.2px,#4a4a4a 1.2px,#4a4a4a 2.5px);opacity:.85;"></div>
<svg style="left:1729.0px;top:39.3px;" width="20" height="11" viewBox="0 0 20 11"><path d="M1.2 2.4H7.4L4.3 6Z" fill="#c6c6c6"/><path d="M9 1.3H18.6M9 3.9H18.6M9 6.5H18.6M9 9.1H18.6" stroke="#c2c2c2" stroke-width="1.25"/></svg>
<div style="left:1480px;top:33px;width:86px;height:25px;background:linear-gradient(#4f4f4f,#444 60%,#424242);border-top:1px solid #5e5e5e;border-right:1px solid #222;"></div>
<div style="left:1484px;top:38px;width:4px;height:13px;background:repeating-linear-gradient(#2a2a2a 0,#2a2a2a 1px,transparent 1px,transparent 2px);opacity:.7;"></div>
<span id="t52" class="t" style="left:1492.5px;top:39.94px;font:normal 13px/14.521px 'Liberation Sans',sans-serif;color:#ededed;letter-spacing:0.553px;-webkit-text-stroke:0.45px #ededed;">Elementi</span>
<svg style="left:1552.5px;top:41px;" width="9" height="9" viewBox="0 0 9 9"><path d="M1.4 1.4L7.8 7.8M7.8 1.4L1.4 7.8" stroke="#c2c2c2" stroke-width="1.35" fill="none"/></svg>
<div style="left:1480px;top:58px;width:290.5px;height:23px;background:#474747;border-bottom:1px solid #3a3a3a;"></div>
<div style="left:1480px;top:58px;width:26.5px;height:23px;background:#3b3b3b;"></div>
<span id="t53" class="t" style="left:1485.3px;top:62.59px;font:normal 13.6px/15.191px 'Liberation Sans',sans-serif;color:#808080;letter-spacing:0px;letter-spacing:2px;transform:scaleX(1.28);transform-origin:0 50%;">{}</span>
<div style="left:1507px;top:59.5px;width:10px;height:21.5px;background:#d4c473;"></div>
<svg style="left:1524px;top:65px;" width="15" height="11" viewBox="0 0 15 11"><path d="M0.7 5.6C3.2 1.6 11.8 1.6 14.3 5.6C11.8 9.6 3.2 9.6 0.7 5.6Z" fill="none" stroke="#c8c8c8" stroke-width="1.4"/><circle cx="7.5" cy="5.4" r="3.1" fill="#c8c8c8"/><circle cx="7.5" cy="5.4" r="2" fill="#2e2e2e"/><circle cx="8.5" cy="4.5" r=".85" fill="#f0f0f0"/></svg>
<div style="left:1548.5px;top:67.5px;width:6px;height:6px;background:#c6c6c6;border-radius:50%;"></div>
<svg style="left:1564px;top:64.5px;" width="15" height="12" viewBox="0 0 15 12"><path d="M0.5 0.5H9L14 4.5V11H0.5Z" fill="#b4b4b4"/><path d="M9 0.5V4.8H14" fill="none" stroke="#474747" stroke-width="1.1"/></svg>
<span id="t54" class="t" style="left:1586px;top:64.61px;font:normal 12.7px/14.186px 'Liberation Sans',sans-serif;color:#e6e6e6;letter-spacing:0.289px;-webkit-text-stroke:0.45px #e6e6e6;">Stage</span>
<span id="t55" class="t" style="left:1627.6px;top:64.33px;font:normal 13px/14.521px 'Liberation Sans',sans-serif;color:#9d9d9d;letter-spacing:1.178px;">&lt;div&gt;</span>
<div style="left:1480px;top:420px;width:290.5px;height:185.5px;background:#414141;"></div>
<div style="left:1480px;top:420px;width:290.5px;height:25px;background:linear-gradient(#313131,#2b2b2b);border-bottom:2px solid #151515;border-top:1px solid #1f1f1f;"></div>
<div style="left:1755.5px;top:420px;width:15px;height:24px;background:linear-gradient(#3a3a3a,#303030);border-left:1px solid #1e1e1e;"></div>
<div style="left:1761.0px;top:425px;width:4.5px;height:14px;background:repeating-linear-gradient(#1f1f1f 0,#1f1f1f 1.2px,#4a4a4a 1.2px,#4a4a4a 2.5px);opacity:.85;"></div>
<svg style="left:1729.0px;top:426.3px;" width="20" height="11" viewBox="0 0 20 11"><path d="M1.2 2.4H7.4L4.3 6Z" fill="#c6c6c6"/><path d="M9 1.3H18.6M9 3.9H18.6M9 6.5H18.6M9 9.1H18.6" stroke="#c2c2c2" stroke-width="1.25"/></svg>
<div style="left:1480px;top:420px;width:80px;height:25px;background:linear-gradient(#4f4f4f,#444 60%,#424242);border-top:1px solid #5e5e5e;border-right:1px solid #222;"></div>
<div style="left:1484px;top:425px;width:4px;height:13px;background:repeating-linear-gradient(#2a2a2a 0,#2a2a2a 1px,transparent 1px,transparent 2px);opacity:.7;"></div>
<span id="t56" class="t" style="left:1492.5px;top:426.94px;font:normal 13px/14.521px 'Liberation Sans',sans-serif;color:#ededed;letter-spacing:0.643px;-webkit-text-stroke:0.45px #ededed;">Libreria</span>
<svg style="left:1547px;top:428px;" width="9" height="9" viewBox="0 0 9 9"><path d="M1.4 1.4L7.8 7.8M7.8 1.4L1.4 7.8" stroke="#c2c2c2" stroke-width="1.35" fill="none"/></svg>
<div style="left:1480.5px;top:447.3px;width:289.5px;height:23.7px;background:linear-gradient(#5b5b5b,#4b4b4b 50%,#444);border-top:1px solid #676767;border-bottom:1.6px solid #292929;"></div>
<svg style="left:1487.5px;top:456.0px;" width="9" height="6" viewBox="0 0 9 6"><path d="M0 0H9L4.5 5.5Z" fill="#e0e0e0"/></svg>
<span id="t57" class="t" style="left:1505.8px;top:452.81px;font:normal 12.7px/14.186px 'Liberation Sans',sans-serif;color:#e6e6e6;letter-spacing:0.555px;-webkit-text-stroke:0.45px #e6e6e6;">Risorse</span>
<svg style="left:1747px;top:453.0px;" width="11" height="11" viewBox="0 0 11 11"><path d="M5.5 0.5V10.5M0.5 5.5H10.5" stroke="#e2e2e2" stroke-width="2"/></svg>
<div style="left:1480.5px;top:471px;width:289.5px;height:24.2px;background:linear-gradient(#5b5b5b,#4b4b4b 50%,#444);border-top:1px solid #676767;border-bottom:1.6px solid #292929;"></div>
<svg style="left:1487.5px;top:480.5px;" width="9" height="6" viewBox="0 0 9 6"><path d="M0 0H9L4.5 5.5Z" fill="#e0e0e0"/></svg>
<span id="t58" class="t" style="left:1505.8px;top:477.31px;font:normal 12.7px/14.186px 'Liberation Sans',sans-serif;color:#e6e6e6;letter-spacing:0.799px;-webkit-text-stroke:0.45px #e6e6e6;">Simboli</span>
<svg style="left:1747px;top:477.5px;" width="11" height="11" viewBox="0 0 11 11"><path d="M5.5 0.5V10.5M0.5 5.5H10.5" stroke="#e2e2e2" stroke-width="2"/></svg>
<div style="left:1480.5px;top:495.2px;width:289.5px;height:24.8px;background:linear-gradient(#5b5b5b,#4b4b4b 50%,#444);border-top:1px solid #676767;border-bottom:1.6px solid #292929;"></div>
<svg style="left:1487.5px;top:504.99999999999994px;" width="9" height="6" viewBox="0 0 9 6"><path d="M0 0H9L4.5 5.5Z" fill="#e0e0e0"/></svg>
<span id="t59" class="t" style="left:1505.8px;top:501.81px;font:normal 12.7px/14.186px 'Liberation Sans',sans-serif;color:#e6e6e6;letter-spacing:0.838px;-webkit-text-stroke:0.45px #e6e6e6;">Caratteri</span>
<svg style="left:1747px;top:501.99999999999994px;" width="11" height="11" viewBox="0 0 11 11"><path d="M5.5 0.5V10.5M0.5 5.5H10.5" stroke="#e2e2e2" stroke-width="2"/></svg>
<div style="left:343px;top:611px;width:1429px;height:549px;background:#424242;"></div>
<div style="left:342.5px;top:611px;width:13px;height:549px;background:linear-gradient(90deg,#3a3a3a 0,#4f4f4f 10.5px,#1e1e1e 10.8px,#1e1e1e 13px);"></div>
<div style="left:346.5px;top:868px;width:4px;height:30px;background:repeating-linear-gradient(#2a2a2a 0,#2a2a2a 1px,transparent 1px,transparent 2px);opacity:.6;"></div>
<div style="left:355.4px;top:611px;width:335.6px;height:51.5px;background:linear-gradient(#4c4c4c,#434343 55%,#3b3b3b);border-bottom:1px solid #242424;"></div>
<svg style="left:364px;top:624px;" width="70" height="21" viewBox="0 0 70 21"><defs><linearGradient id="gc" x1="0" y1="0" x2="0" y2="21" gradientUnits="userSpaceOnUse"><stop offset="0" stop-color="#d2d2d2"/><stop offset="1" stop-color="#9a9a9a"/></linearGradient></defs><rect x="1.3" y="4" width="3" height="12.2" fill="url(#gc)"/><path d="M16.8 4.3V15.9L6.3 10.1Z" fill="url(#gc)"/><path d="M25.4 0.6V20L44.4 10.3Z" fill="url(#gc)"/><path d="M51.7 4.3V15.9L62.4 10.1Z" fill="url(#gc)"/><rect x="64.7" y="4" width="3" height="12.2" fill="url(#gc)"/></svg>
<svg style="left:441.5px;top:629.5px;" width="16" height="14" viewBox="0 0 16 14"><path d="M5.6 1L1.6 4.6L5.6 8.2M2.2 4.6H9.6a3.5 3.5 0 0 1 0 7H7.4" fill="none" stroke="#6a6a6a" stroke-width="1.9"/></svg>
<div style="left:516px;top:622px;width:30px;height:28.5px;background:#333;border:1px solid #222;border-radius:4px;box-shadow:0 1px 0 rgba(255,255,255,.1);"></div>
<svg style="left:521.5px;top:625.5px;" width="20" height="22" viewBox="0 0 20 22"><defs><pattern id="hat" width="2.4" height="2.4" patternUnits="userSpaceOnUse" patternTransform="rotate(-45)"><rect width="2.4" height="2.4" fill="#c8323a"/><rect width="2.4" height=".8" fill="#e89096"/></pattern></defs><path d="M7.5 1.5H12.5M10 1.5V5" stroke="#d8d8d8" stroke-width="1.4"/><path d="M3 5.5L5 3.8" stroke="#d8d8d8" stroke-width="1.6"/><circle cx="10" cy="12.5" r="6.6" fill="url(#hat)" stroke="#d8d8d8" stroke-width="1.1"/></svg>
<div style="left:549px;top:622px;width:30px;height:28.5px;background:#333;border:1px solid #222;border-radius:4px;box-shadow:0 1px 0 rgba(255,255,255,.1);"></div>
<svg style="left:552.5px;top:630.5px;" width="22" height="13" viewBox="0 0 22 13"><path d="M1 1H21V12H1Z" fill="#1f9a86"/><path d="M0.8 0.8L8.5 6.5L0.8 12.2Z" fill="#f2f2f2"/><path d="M21.2 0.8L13.5 6.5L21.2 12.2Z" fill="#f2f2f2"/></svg>
<div style="left:581.5px;top:622px;width:30px;height:28.5px;background:linear-gradient(#565656,#444);border:1px solid #232323;border-radius:4px;box-shadow:0 1px 0 rgba(255,255,255,.1),inset 0 1px 0 rgba(255,255,255,.1);"></div>
<svg style="left:587.8px;top:625.5px;" width="16" height="22" viewBox="0 0 16 22"><path d="M8 1.3C4.3 1.3 2.6 4.2 3.6 7.4L7 15.2H9L12.4 7.4C13.4 4.2 11.7 1.3 8 1.3Z" fill="#9a9a9a" stroke="#dadada" stroke-width="1.2"/><path d="M8 15V20.5" stroke="#dadada" stroke-width="1.8"/></svg>
<div style="left:622px;top:622px;width:34.5px;height:28.5px;background:linear-gradient(#565656,#444);border:1px solid #232323;border-radius:4px;box-shadow:0 1px 0 rgba(255,255,255,.1),inset 0 1px 0 rgba(255,255,255,.1);"></div>
<svg style="left:627.5px;top:626.5px;" width="24" height="19" viewBox="0 0 24 19"><defs><pattern id="grd" width="2" height="2" patternUnits="userSpaceOnUse"><rect width="2" height="2" fill="#6a6a6a"/><rect width="1" height="1" fill="#8a8a8a"/></pattern></defs><rect x="0.6" y="0.6" width="22.8" height="17.8" fill="url(#grd)" stroke="#bdbdbd" stroke-width="1.1"/><path d="M1.5 17.5L22.5 1.5" stroke="#e2e2e2" stroke-width="1.8"/></svg>
<div style="left:668px;top:611px;width:1px;height:50px;background:#3a3a3a;"></div>
<svg style="left:675px;top:649px;" width="10" height="7" viewBox="0 0 10 7"><path d="M1 1L5 5.2L9 1" fill="none" stroke="#e0e0e0" stroke-width="1.8"/></svg>
<div style="left:355px;top:662px;width:336px;height:20px;background:#2f2f2f;"></div>
<div style="left:355px;top:682px;width:336px;height:24px;background:#4a4a4a;border-bottom:1px solid #3c3c3c;"></div>
<div style="left:668px;top:682px;width:1px;height:24px;background:#424242;"></div>
<div style="left:355px;top:682px;width:25.5px;height:455px;background:#313131;"></div>
<div style="left:380.5px;top:706px;width:310.5px;height:431px;background:#424242;"></div>
<span id="t60" class="t" style="left:359.3px;top:664.19px;font:normal 13.6px/15.191px 'Liberation Sans',sans-serif;color:#808080;letter-spacing:0px;letter-spacing:2px;transform:scaleX(1.28);transform-origin:0 50%;">{}</span>
<span id="t61" class="t" style="left:359.3px;top:687.39px;font:normal 13.6px/15.191px 'Liberation Sans',sans-serif;color:#808080;letter-spacing:0px;letter-spacing:2px;transform:scaleX(1.28);transform-origin:0 50%;">{}</span>
<svg style="left:398.3px;top:666px;" width="9" height="12.4" viewBox="0 0 9 12.4"><path d="M0.3 6.1H8.7" stroke="#e4e4e4" stroke-width="1.2"/><path d="M0.3 0.4H8.7L4.5 4.4Z M0.3 11.9H8.7L4.5 7.9Z" fill="#e4e4e4"/></svg>
<span id="t62" class="t" style="left:467.9px;top:666.03px;font:normal 12.9px/14.409px 'Liberation Sans',sans-serif;color:#ababab;letter-spacing:0.215px;">Azioni</span>
<svg style="left:673px;top:665.5px;" width="14" height="14" viewBox="0 0 14 14"><path d="M4.5 0.8C2.8 0.8 2.6 1.8 2.6 3.4C2.6 5.4 2.4 6.3 0.9 7C2.4 7.7 2.6 8.6 2.6 10.6C2.6 12.2 2.8 13.2 4.5 13.2M9.5 0.8C11.2 0.8 11.4 1.8 11.4 3.4C11.4 5.4 11.6 6.3 13.1 7C11.6 7.7 11.4 8.6 11.4 10.6C11.4 12.2 11.2 13.2 9.5 13.2" fill="none" stroke="#9c9c9c" stroke-width="1.1"/><path d="M7 3.8L10.2 7L7 10.2L3.8 7Z" fill="#dcdcdc"/></svg>
<div style="left:380px;top:682.7px;width:8.8px;height:23.3px;background:#f2e486;"></div>
<svg style="left:399.5px;top:691.5px;" width="9" height="6" viewBox="0 0 9 6"><path d="M0 0H9L4.5 5.5Z" fill="#e0e0e0"/></svg>
<svg style="left:419.5px;top:689px;" width="16" height="11.5" viewBox="0 0 15 11"><path d="M0.7 5.6C3.2 1.6 11.8 1.6 14.3 5.6C11.8 9.6 3.2 9.6 0.7 5.6Z" fill="none" stroke="#c4c4c4" stroke-width="1.4"/><circle cx="7.5" cy="5.4" r="3.1" fill="#c4c4c4"/><circle cx="7.5" cy="5.4" r="2" fill="#2e2e2e"/><circle cx="8.5" cy="4.5" r=".85" fill="#f0f0f0"/></svg>
<div style="left:446.7px;top:690.7px;width:6.6px;height:6.6px;background:radial-gradient(#c4c4c4,#a4a4a4);border-radius:50%;"></div>
<span id="t63" class="t" style="left:467.6px;top:687.45px;font:normal 14.2px/15.861px 'Liberation Sans',sans-serif;color:#e6e6e6;letter-spacing:0.244px;-webkit-text-stroke:0.45px #e6e6e6;">Stage</span>
<div style="left:355px;top:1137px;width:336px;height:20.5px;background:linear-gradient(#464646,#3c3c3c);border-top:1px solid #2a2a2a;border-bottom:1px solid #262626;"></div>
<svg style="left:396.5px;top:1141.5px;" width="14" height="12" viewBox="0 0 14 12"><path d="M0.6 0.8H13.4L8.2 6V11.2L5.8 9.6V6Z" fill="#dcdcdc"/></svg>
<div style="left:418.5px;top:1138px;width:18.5px;height:18.5px;background:#2c2c2c;border:1px solid #1e1e1e;border-radius:3px;"></div>
<svg style="left:422.5px;top:1141.5px;" width="11" height="12" viewBox="0 0 11 12"><path d="M2 11.5V5.5a3.5 3.5 0 0 1 7 0V11.5" fill="none" stroke="#e6e6e6" stroke-width="2.4"/><path d="M0.8 9.3H3.2M7.8 9.3H10.2" stroke="#2c2c2c" stroke-width="1"/></svg>
<svg style="left:445px;top:1141.5px;" width="14" height="12" viewBox="0 0 14 12"><rect x="0.7" y="0.7" width="12.6" height="10.6" fill="none" stroke="#d8d8d8" stroke-width="1.2"/><path d="M4.8 1V11M9.2 1V11" stroke="#d8d8d8" stroke-width="1.2"/></svg>
<svg style="left:465.5px;top:1148.5px;" width="5" height="5" viewBox="0 0 5 5"><path d="M5 0V5H0Z" fill="#e0e0e0"/></svg>
<div style="left:691px;top:611px;width:7px;height:549px;background:linear-gradient(90deg,#262626 0,#262626 1px,#555 1px,#4a4a4a 5px,#262626 5px,#262626 6px,#3c3c3c 6px);"></div>
<div style="left:698px;top:611px;width:1051px;height:12.5px;background:linear-gradient(#484848,#424242);"></div>
<div style="left:698px;top:623px;width:1051px;height:20px;background:linear-gradient(#3e3e3e,#3a3a3a);border-top:1px solid #303030;border-bottom:1px solid #2e2e2e;"></div>
<div style="left:698px;top:643px;width:1051px;height:19px;background:linear-gradient(#3f3f3f,#353535);border-bottom:1px solid #222;"></div>
<div style="left:698px;top:662px;width:1051px;height:20px;background:#2f2f2f;"></div>
<div style="left:698px;top:682px;width:1051px;height:24px;background:#424242;border-bottom:1px solid #3b3b3b;"></div>
<div style="left:698px;top:706px;width:1051px;height:431px;background:#4a4a4a;"></div>
<svg style="left:698px;top:623.5px;" width="1051" height="20" viewBox="0 0 1051 20"><path d="M66.5 0V5.5" stroke="#2b2b2b" stroke-width="1.2"/><path d="M67.5 0V5.5" stroke="#555" stroke-width=".8"/><path d="M127.3 0V9.5" stroke="#2b2b2b" stroke-width="1.2"/><path d="M128.3 0V9.5" stroke="#555" stroke-width=".8"/><path d="M188.0 0V5.5" stroke="#2b2b2b" stroke-width="1.2"/><path d="M189.0 0V5.5" stroke="#555" stroke-width=".8"/><path d="M248.8 0V18.5" stroke="#2b2b2b" stroke-width="1.2"/><path d="M249.8 0V18.5" stroke="#555" stroke-width=".8"/><path d="M309.5 0V5.5" stroke="#2b2b2b" stroke-width="1.2"/><path d="M310.5 0V5.5" stroke="#555" stroke-width=".8"/><path d="M370.3 0V9.5" stroke="#2b2b2b" stroke-width="1.2"/><path d="M371.3 0V9.5" stroke="#555" stroke-width=".8"/><path d="M431.0 0V5.5" stroke="#2b2b2b" stroke-width="1.2"/><path d="M432.0 0V5.5" stroke="#555" stroke-width=".8"/><path d="M491.8 0V18.5" stroke="#2b2b2b" stroke-width="1.2"/><path d="M492.8 0V18.5" stroke="#555" stroke-width=".8"/><path d="M552.5 0V5.5" stroke="#2b2b2b" stroke-width="1.2"/><path d="M553.5 0V5.5" stroke="#555" stroke-width=".8"/><path d="M613.3 0V9.5" stroke="#2b2b2b" stroke-width="1.2"/><path d="M614.3 0V9.5" stroke="#555" stroke-width=".8"/><path d="M674.0 0V5.5" stroke="#2b2b2b" stroke-width="1.2"/><path d="M675.0 0V5.5" stroke="#555" stroke-width=".8"/><path d="M734.8 0V18.5" stroke="#2b2b2b" stroke-width="1.2"/><path d="M735.8 0V18.5" stroke="#555" stroke-width=".8"/><path d="M795.5 0V5.5" stroke="#2b2b2b" stroke-width="1.2"/><path d="M796.5 0V5.5" stroke="#555" stroke-width=".8"/><path d="M856.3 0V9.5" stroke="#2b2b2b" stroke-width="1.2"/><path d="M857.3 0V9.5" stroke="#555" stroke-width=".8"/><path d="M917.0 0V5.5" stroke="#2b2b2b" stroke-width="1.2"/><path d="M918.0 0V5.5" stroke="#555" stroke-width=".8"/><path d="M977.8 0V18.5" stroke="#2b2b2b" stroke-width="1.2"/><path d="M978.8 0V18.5" stroke="#555" stroke-width=".8"/><path d="M1038.5 0V5.5" stroke="#2b2b2b" stroke-width="1.2"/><path d="M1039.5 0V5.5" stroke="#555" stroke-width=".8"/></svg>
<span id="t64" class="t" style="left:952.2px;top:628.81px;font:normal 11.7px/13.069px 'Liberation Sans',sans-serif;color:#b2b2b2;letter-spacing:-0.013px;">0:01</span>
<span id="t65" class="t" style="left:1195.2px;top:628.81px;font:normal 11.7px/13.069px 'Liberation Sans',sans-serif;color:#b2b2b2;letter-spacing:-0.012px;">0:02</span>
<span id="t66" class="t" style="left:1438.2px;top:628.81px;font:normal 11.7px/13.069px 'Liberation Sans',sans-serif;color:#b2b2b2;letter-spacing:-0.012px;">0:03</span>
<span id="t67" class="t" style="left:1681.2px;top:628.81px;font:normal 11.7px/13.069px 'Liberation Sans',sans-serif;color:#b2b2b2;letter-spacing:-0.012px;">0:04</span>
<div style="left:699.2px;top:612.6px;width:9.6px;height:10.6px;background:linear-gradient(#9c9c9c,#6c6c6c);border:1px solid #3a3a3a;border-radius:1.5px;"></div>
<svg style="left:698.5px;top:624px;" width="11" height="18" viewBox="0 0 11 18"><defs><linearGradient id="gp" x1="0" y1="0" x2="1" y2="0"><stop offset="0" stop-color="#e0c060"/><stop offset="1" stop-color="#a88a30"/></linearGradient></defs><path d="M1 0.8H10V11.5L5.5 17L1 11.5Z" fill="url(#gp)" stroke="#3a3010" stroke-width=".9"/></svg>
<div style="left:703px;top:641px;width:2px;height:496px;background:#d3232c;"></div>
<div style="left:710px;top:626px;width:29.5px;height:16px;background:#1f1f1f;border-radius:2.5px;"></div>
<span id="t68" class="t" style="left:713.2px;top:628.02px;font:normal 11.8px/13.181px 'Liberation Sans',sans-serif;color:#f5f2e0;letter-spacing:0.258px;-webkit-text-stroke:0.45px #f5f2e0;">0:00</span>
<div style="left:1749px;top:611px;width:23px;height:549px;background:#494949;border-left:1px solid #2c2c2c;"></div>
<div style="left:1750px;top:690px;width:18.5px;height:421px;background:#303030;"></div>
<div style="left:1750px;top:662.5px;width:18.5px;height:27.5px;background:linear-gradient(#4c4c4c,#3f3f3f);border:1px solid #3a3a3a;border-top-color:#5a5a5a;"></div>
<svg style="left:1754px;top:672px;" width="11" height="7" viewBox="0 0 11 7"><path d="M1 6L5.5 1.3L10 6" fill="none" stroke="#5e5e5e" stroke-width="1.2"/></svg>
<div style="left:1750px;top:1111px;width:18.5px;height:26px;background:linear-gradient(#494949,#404040);border:1px solid #3a3a3a;border-top-color:#555;"></div>
<svg style="left:1754px;top:1119px;" width="11" height="7" viewBox="0 0 11 7"><path d="M1 1H10" stroke="#2e2e2e" stroke-width="1.3"/><path d="M3.5 2.5L5.5 5L7.5 2.5" fill="#3a3a3a"/></svg>
<div style="left:698px;top:1137px;width:1051px;height:20.5px;background:#323232;border-top:1px solid #2a2a2a;border-bottom:1px solid #262626;"></div>
<div style="left:698px;top:1138px;width:25.5px;height:18.5px;background:#444;"></div>
<svg style="left:707px;top:1143px;" width="7" height="9" viewBox="0 0 7 9"><path d="M6.5 0.5V8.5L0.5 4.5Z" fill="#393939"/></svg>
<div style="left:1479.5px;top:1138px;width:27px;height:18.5px;background:#444;"></div>
<svg style="left:1489px;top:1143px;" width="7" height="9" viewBox="0 0 7 9"><path d="M0.5 0.5V8.5L6.5 4.5Z" fill="#393939"/></svg>
<div style="left:1506.5px;top:1138px;width:20.5px;height:18.5px;background:#383838;border-left:1.5px solid #242424;border-right:1.5px solid #242424;"></div>
<svg style="left:1509.5px;top:1140px;" width="15" height="15" viewBox="0 0 15 15"><path d="M8.5 1H14V6.5L12 4.5L9.8 6.7L8.3 5.2L10.5 3Z M6.5 14H1V8.5L3 10.5L5.2 8.3L6.7 9.8L4.5 12Z" fill="#d6d6d6"/></svg>
<div style="left:1527px;top:1138px;width:222px;height:18.5px;background:linear-gradient(#484848,#3e3e3e);"></div>
<svg style="left:1534px;top:1145px;" width="13" height="8" viewBox="0 0 13 8"><path d="M0.5 7.5L4.5 2L6.5 4.5L8.5 1L12.5 7.5Z" fill="none" stroke="#c4c4c4" stroke-width="1"/><path d="M1.5 7H11.5" stroke="#c4c4c4" stroke-width="1.2"/></svg>
<div style="left:1564px;top:1143.8px;width:146.5px;height:8px;background:#3a3a3a;border:1.5px solid #232323;border-radius:1px;box-shadow:0 1px 0 rgba(255,255,255,.07);"></div>
<div style="left:1662px;top:1141.2px;width:12.8px;height:12.8px;background:radial-gradient(circle at 50% 35%,#686868,#4c4c4c);border:1.3px solid #262626;border-radius:50%;"></div>
<svg style="left:1723px;top:1142px;" width="22" height="11" viewBox="0 0 22 11"><path d="M0.8 10L7.5 2.5L11 6.2L14.5 1L21.2 10Z" fill="none" stroke="#c4c4c4" stroke-width="1.1"/><path d="M2 9.6H20" stroke="#c4c4c4" stroke-width="1.2"/></svg>
<div style="left:343px;top:1157.5px;width:1429px;height:2.5px;background:#1a1a1a;"></div>
</div></body></html>
